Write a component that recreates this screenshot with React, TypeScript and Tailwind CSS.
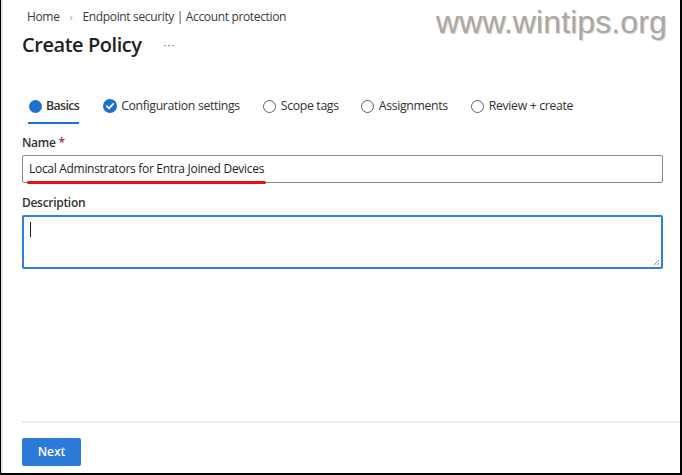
import React from 'react'

const font = { fontFamily: '"Open Sans", "Noto Sans", sans-serif' }

function Radio() {
  return <span className="inline-block w-[13px] h-[13px] rounded-full border border-[#605e5c] bg-white" />
}

function CheckCircle() {
  return (
    <svg width="14" height="14" viewBox="0 0 14 14">
      <circle cx="7" cy="7" r="7" fill="#1f6fd1" />
      <path d="M3.8 7.2 L6 9.3 L10.3 4.9" stroke="white" strokeWidth="1.7" fill="none" strokeLinecap="round" strokeLinejoin="round" />
    </svg>
  )
}

export default function App() {
  const tabs = [
    { label: 'Scope tags', gap: 'ml-[23px]' },
    { label: 'Assignments', gap: 'ml-[22px]' },
    { label: 'Review + create', gap: 'ml-[23px]' },
  ]

  return (
    <div className="w-[682px] h-[475px] bg-black pl-px pr-[2px] pb-[2px]">
      <div className="relative w-full h-full bg-white border-l-2 border-[#e4e4e4] flex flex-col text-[#323130]" style={font}>
        {/* Watermark */}
        <div
          className="absolute left-[433px] top-[-2px] text-[32px] text-[#a8a8a8] tracking-[0.1px]"
          style={{ fontFamily: '"Liberation Sans", Arial, sans-serif', textShadow: '1px 1px 1px #d8d0c4' }}
        >
          www.wintips.org
        </div>

        <div className="pl-[19px] pr-[18px]">
          {/* Breadcrumb */}
          <div className="pt-[9px] h-[25px] flex items-center text-[12px] leading-4 text-[#3b3a39] tracking-[-0.35px]">
            <span className="pl-[5px]">Home</span>
            <span className="ml-[10px] text-[#a19f9d] text-[11px]">›</span>
            <span className="ml-[10px]">Endpoint security | Account protection</span>
          </div>

          {/* Title */}
          <div className="mt-[6px] h-[28px] flex items-center">
            <h1 className="text-[20px] font-semibold leading-7 text-[#201f1e] tracking-[-0.45px]">Create Policy</h1>
            <span className="ml-[22px] text-[11px] text-[#605e5c] tracking-[1px]">···</span>
          </div>

          {/* Tabs */}
          <div className="mt-[38px] flex items-start text-[12.3px] leading-[18px] text-[#323130] tracking-[-0.35px]">
            <div className="ml-[6px] flex items-center gap-[4px] pl-px pb-[7px] border-b-2 border-[#1f6fd1]">
              <span className="inline-block w-[13px] h-[13px] rounded-full bg-[#1f6fd1]" />
              <span className="font-semibold tracking-[-0.6px]">Basics</span>
            </div>
            <div className="ml-[24px] flex items-center gap-[4px]">
              <CheckCircle />
              <span>Configuration settings</span>
            </div>
            {tabs.map((t) => (
              <div key={t.label} className={`${t.gap} flex items-center gap-[5px]`}>
                <Radio />
                <span>{t.label}</span>
              </div>
            ))}
          </div>

          {/* Name */}
          <div className="mt-[11px] h-[16px] flex items-center text-[12px] font-semibold text-[#323130] tracking-[-0.3px]">
            Name <span className="ml-[3px] text-[#a4262c]">*</span>
          </div>
          <div className="relative mt-[4px] w-[641px] h-[28px] border border-[#8a8886] rounded-[2px] flex items-center pl-[6px] text-[12px] text-[#201f1e] tracking-[-0.3px]">
            Local Adminstrators for Entra Joined Devices
            <span className="absolute left-[4px] bottom-[-2px] w-[239px] h-[3px] bg-[#e8101a] rounded-full" />
          </div>

          {/* Description */}
          <div className="mt-[12px] h-[16px] flex items-center text-[12px] font-semibold text-[#323130] tracking-[-0.3px]">Description</div>
          <div className="relative mt-[4px] w-[641px] h-[54px] border-2 border-[#2f7fe0] rounded-[2px]">
            <span className="absolute left-[6px] top-[5px] w-px h-[15px] bg-[#201f1e]" />
            <svg className="absolute right-[1px] bottom-[1px]" width="7" height="7" viewBox="0 0 7 7">
              <path d="M6 1 L1 6 M6 4 L4 6" stroke="#8a8886" strokeWidth="1" />
            </svg>
          </div>
        </div>

        <div className="flex-1" />

        {/* Footer */}
        <div className="ml-[19px] h-[2px] bg-[#ededed]" />
        <div className="pl-[19px] pt-[15px] pb-[7px]">
          <button className="w-[59px] h-[28px] bg-[#2a7ad8] rounded-[2px] text-white text-[12px] font-semibold">Next</button>
        </div>
      </div>
    </div>
  )
}
